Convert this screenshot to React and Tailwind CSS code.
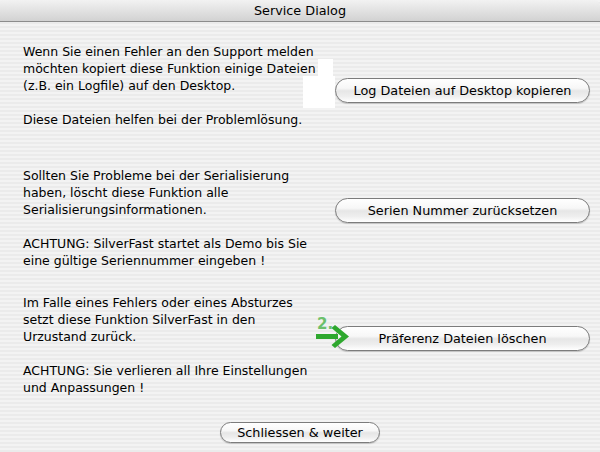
import React from 'react';

const font = { fontFamily: '"DejaVu Sans", "Noto Sans", sans-serif' };

function AquaButton({ children, className = '' }) {
  return (
    <button
      type="button"
      className={
        'flex items-center justify-center rounded-full border border-[#7c7c7c] text-[12.8px] text-black ' +
        'bg-[linear-gradient(180deg,#ffffff_0%,#f7f7f7_40%,#e6e6e6_52%,#eeeeee_75%,#ffffff_100%)] ' +
        'shadow-[0_1px_1px_rgba(0,0,0,0.18)] ' +
        className
      }
    >
      {children}
    </button>
  );
}

function TextBlock({ lines }) {
  return (
    <div className="w-[312px] pl-[23px] text-[12.5px] leading-[17px] text-black whitespace-pre">
      {lines.map((l, i) => (
        <div key={i} className="h-[17px]">
          {l || ' '}
        </div>
      ))}
    </div>
  );
}

function GreenArrow() {
  return (
    <div className="absolute left-[315px] top-[316px] w-[36px] h-[36px]">
      <span className="absolute left-[2px] top-[-3px] text-[15px] font-bold text-[#6cc06c]">2.</span>
      <svg width="36" height="36" viewBox="0 0 36 36" className="absolute left-0 top-0">
        <rect x="1" y="18" width="22" height="5" fill="#2ea82e" />
        <path d="M20 9 L34 20.5 L20 32 L16.5 29 L26.5 20.5 L16.5 12 Z" fill="#2ea82e" />
      </svg>
    </div>
  );
}

export default function App() {
  return (
    <div
      className="relative w-[600px] h-[452px] overflow-hidden bg-[repeating-linear-gradient(180deg,#f3f3f3_0px,#f3f3f3_2px,#ebebeb_2px,#ebebeb_4px)]"
      style={font}
    >
      <div className="h-[22px] rounded-tr-[6px] rounded-tl-[2px] border-b border-[#8c8c8c] bg-[linear-gradient(180deg,#f2f2f2_0%,#e2e2e2_50%,#d2d2d2_100%)] flex items-center justify-center text-[12.8px] text-black">
        Service Dialog
      </div>

      <div className="absolute left-[318px] top-[59px] w-[15px] h-[17px] bg-white" />
      <div className="absolute left-[303px] top-[76px] w-[32px] h-[32px] bg-white" />

      <div className="relative flex flex-col">
        <div className="flex mt-[21px]">
          <TextBlock
            lines={[
              'Wenn Sie einen Fehler an den Support melden',
              'möchten kopiert diese Funktion einige Dateien',
              '(z.B. ein Logfile) auf den Desktop.',
              '',
              'Diese Dateien helfen bei der Problemlösung.',
            ]}
          />
          <AquaButton className="mt-[35px] ml-[23px] w-[255px] h-[25px]">
            Log Dateien auf Desktop kopieren
          </AquaButton>
        </div>

        <div className="flex mt-[39px]">
          <TextBlock
            lines={[
              'Sollten Sie Probleme bei der Serialisierung',
              'haben, löscht diese Funktion alle',
              'Serialisierungsinformationen.',
              '',
              'ACHTUNG: SilverFast startet als Demo bis Sie',
              'eine gültige Seriennummer eingeben !',
            ]}
          />
          <AquaButton className="mt-[31px] ml-[23px] w-[255px] h-[25px]">
            Serien Nummer zurücksetzen
          </AquaButton>
        </div>

        <div className="flex mt-[25px]">
          <TextBlock
            lines={[
              'Im Falle eines Fehlers oder eines Absturzes',
              'setzt diese Funktion SilverFast in den',
              'Urzustand zurück.',
              '',
              'ACHTUNG: Sie verlieren all Ihre Einstellungen',
              'und Anpassungen !',
            ]}
          />
          <AquaButton className="mt-[32px] ml-[23px] w-[255px] h-[25px]">
            Präferenz Dateien löschen
          </AquaButton>
        </div>

        <div className="flex justify-center mt-[26px]">
          <AquaButton className="w-[160px] h-[21px]">Schliessen &amp; weiter</AquaButton>
        </div>
      </div>

      <GreenArrow />
    </div>
  );
}
